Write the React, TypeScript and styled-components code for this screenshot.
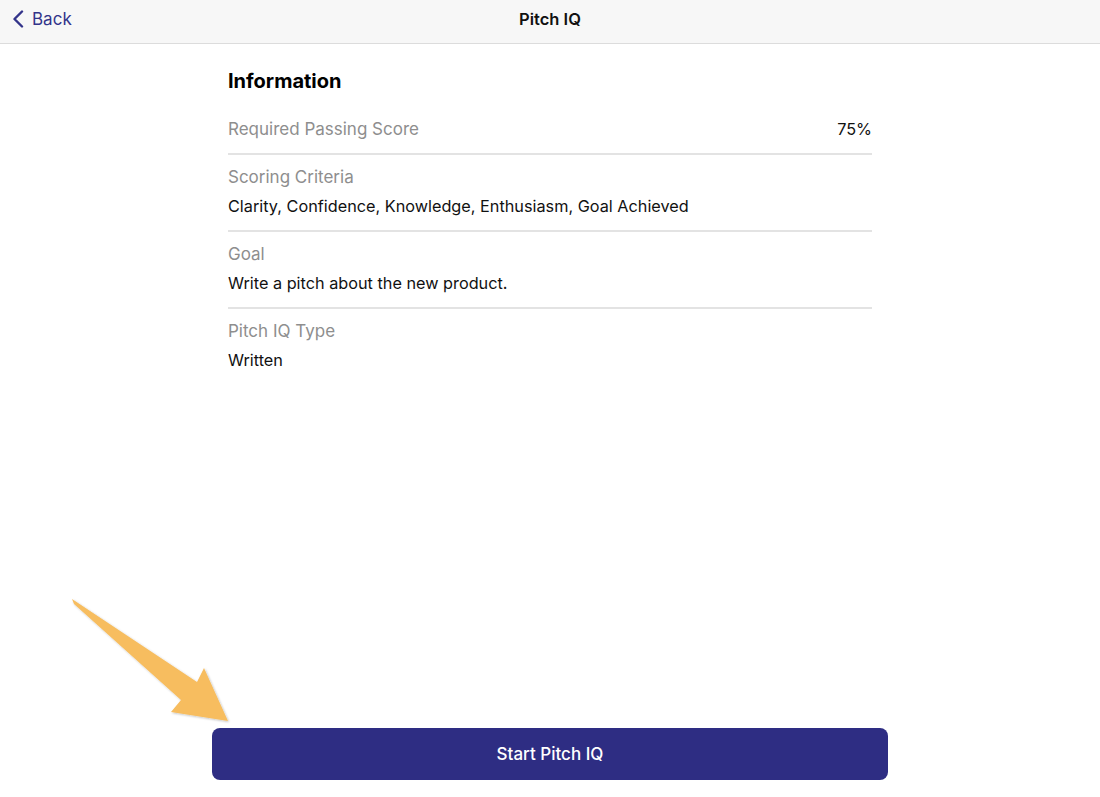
import React from "react";
import styled, {createGlobalStyle} from "styled-components";

const GlobalStyle = createGlobalStyle`
  html, body {
    margin: 0;
    padding: 0;
    background: #fff;
    font-family: Inter, "Noto Sans", sans-serif;
    -webkit-font-smoothing: antialiased;
  }
`

const PAGE = styled.div`
  position: relative;
  width: 1100px;
  height: 797px;
  display: flex;
  flex-direction: column;
  overflow: hidden;
`

const HEADER = styled.header`
  height: 43px;
  flex-shrink: 0;
  display: grid;
  grid-template-columns: 1fr auto 1fr;
  align-items: center;
  background-color: #f7f7f7;
  border-bottom: 1px solid #dcdcdc;
  padding: 0 12px;
`

const BACK = styled.button`
  justify-self: start;
  display: flex;
  align-items: center;
  gap: 8px;
  border: none;
  background: none;
  padding: 0;
  margin-top: -6px;
  color: #33348a;
  font-family: inherit;
  font-size: 17px;
  cursor: pointer;
`

const TITLE = styled.h1`
  margin: 0;
  margin-top: -6px;
  font-size: 16.5px;
  font-weight: 600;
  color: #111;
`

const CONTENT = styled.main`
  flex: 1;
  width: 644px;
  margin: 0 auto;
  padding-top: 25px;
`

const HEADING = styled.h2`
  margin: 0 0 14px;
  font-size: 20px;
  line-height: 24px;
  font-weight: 700;
  color: #000;
`

const ROW = styled.div<{$last?: boolean; $inline?: boolean}>`
  display: flex;
  flex-direction: ${props => props.$inline ? "row" : "column"};
  justify-content: space-between;
  gap: 9px;
  padding: 12px 0 14px;
  border-bottom: ${props => props.$last ? "none" : "2px solid #e3e3e3"};
`

const LABEL = styled.div`
  font-size: 17px;
  line-height: 20px;
  color: #8e8e8e;
`

const VALUE = styled.div`
  font-size: 16.25px;
  line-height: 20px;
  color: #111;
`

const FOOTER = styled.div`
  display: flex;
  justify-content: center;
  padding-bottom: 17px;
`

const START = styled.button`
  width: 676px;
  height: 52px;
  border: none;
  border-radius: 8px;
  background-color: #2e2d83;
  color: #fff;
  font-family: inherit;
  font-size: 17px;
  font-weight: 500;
  cursor: pointer;
`

const ARROW = styled.svg`
  position: absolute;
  left: 0;
  top: 0;
  pointer-events: none;
`

const rows = [
    {label: "Scoring Criteria", value: "Clarity, Confidence, Knowledge, Enthusiasm, Goal Achieved"},
    {label: "Goal", value: "Write a pitch about the new product."},
    {label: "Pitch IQ Type", value: "Written"},
]

const App = () => {
    return (
        <PAGE>
            <GlobalStyle/>
            <HEADER>
                <BACK>
                    <svg width="12" height="18" viewBox="0 0 12 18">
                        <path d="M10 1.5 L2.5 9 L10 16.5" fill="none" stroke="currentColor" strokeWidth="2.4"
                              strokeLinecap="round" strokeLinejoin="round"/>
                    </svg>
                    Back
                </BACK>
                <TITLE>Pitch IQ</TITLE>
                <div/>
            </HEADER>

            <CONTENT>
                <HEADING>Information</HEADING>
                <ROW $inline>
                    <LABEL>Required Passing Score</LABEL>
                    <VALUE>75%</VALUE>
                </ROW>
                {rows.map((r, i) => (
                    <ROW key={r.label} $last={i === rows.length - 1}>
                        <LABEL>{r.label}</LABEL>
                        <VALUE>{r.value}</VALUE>
                    </ROW>
                ))}
            </CONTENT>

            <FOOTER>
                <START>Start Pitch IQ</START>
            </FOOTER>

            <ARROW width="1100" height="797" viewBox="0 0 1100 797">
                <defs>
                    <filter id="sh" x="-20%" y="-20%" width="140%" height="140%">
                        <feDropShadow dx="1" dy="1" stdDeviation="1" floodColor="#000" floodOpacity="0.25"/>
                    </filter>
                </defs>
                <polygon points="72,599 197,682 204,668 228,721 171,712 181,700 74,604"
                         fill="#f7bd5f" filter="url(#sh)"/>
            </ARROW>
        </PAGE>
    )
}

export default App;
